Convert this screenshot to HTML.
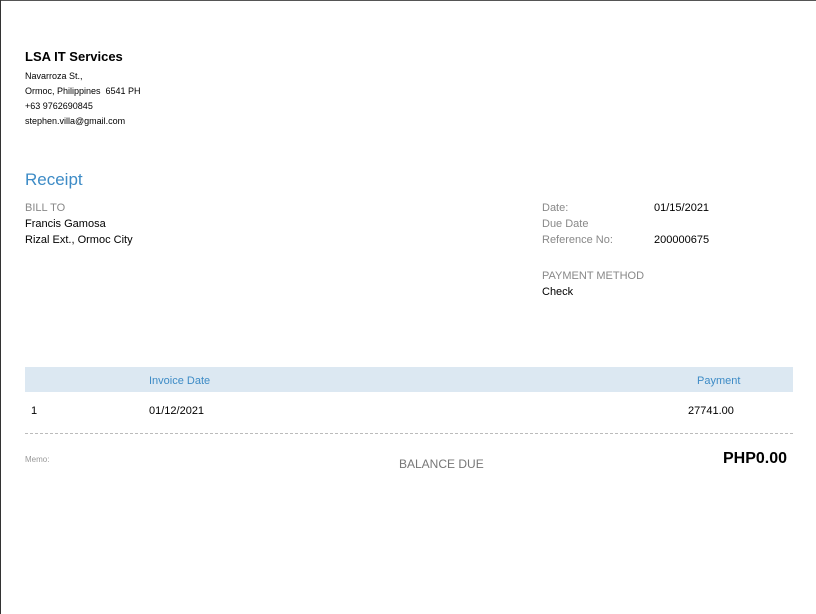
<!DOCTYPE html>
<html><head><style>
body{margin:0;width:816px;height:614px;background:#fff;font-family:"Liberation Sans",Arial,sans-serif;position:relative;overflow:hidden;color:#000}
.a{position:absolute;white-space:nowrap}
.s{font-size:9px}
.m{font-size:11px}
.g{color:#888;font-size:11px}
.b{color:#3d8bc6}
</style></head><body>
<div class="a" style="left:0;top:0;width:816px;height:1px;background:#555"></div>
<div class="a" style="left:0;top:0;width:1px;height:614px;background:#333"></div>
<div class="a" style="left:25px;top:49px;font-size:13px;font-weight:bold">LSA IT Services</div>
<div class="a s" style="left:25px;top:71px">Navarroza St.,</div>
<div class="a s" style="left:25px;top:86px">Ormoc, Philippines&nbsp; 6541 PH</div>
<div class="a s" style="left:25px;top:101px">+63 9762690845</div>
<div class="a s" style="left:25px;top:116px">stephen.villa@gmail.com</div>
<div class="a b" style="left:25px;top:170px;font-size:17px">Receipt</div>
<div class="a g" style="left:25px;top:202px">BILL TO</div>
<div class="a m" style="left:25px;top:218px">Francis Gamosa</div>
<div class="a m" style="left:25px;top:234px">Rizal Ext., Ormoc City</div>
<div class="a g" style="left:542px;top:202px">Date:</div>
<div class="a m" style="left:654px;top:202px">01/15/2021</div>
<div class="a g" style="left:542px;top:218px">Due Date</div>
<div class="a g" style="left:542px;top:234px">Reference No:</div>
<div class="a m" style="left:654px;top:234px">200000675</div>
<div class="a g" style="left:542px;top:270px">PAYMENT METHOD</div>
<div class="a m" style="left:542px;top:286px">Check</div>
<div class="a" style="left:25px;top:367px;width:768px;height:25px;background:#dce8f2"></div>
<div class="a b" style="left:149px;top:375px;font-size:11px">Invoice Date</div>
<div class="a b" style="left:697px;top:375px;font-size:11px">Payment</div>
<div class="a m" style="left:31px;top:405px">1</div>
<div class="a m" style="left:149px;top:405px">01/12/2021</div>
<div class="a m" style="left:688px;top:405px">27741.00</div>
<div class="a" style="left:25px;top:433px;width:768px;border-top:1px dashed #bbb"></div>
<div class="a" style="left:25px;top:455px;font-size:8px;color:#999">Memo:</div>
<div class="a" style="left:399px;top:457px;font-size:12px;color:#777">BALANCE DUE</div>
<div class="a" style="left:723px;top:450px;font-size:16px;font-weight:bold">PHP0.00</div>
</body></html>
